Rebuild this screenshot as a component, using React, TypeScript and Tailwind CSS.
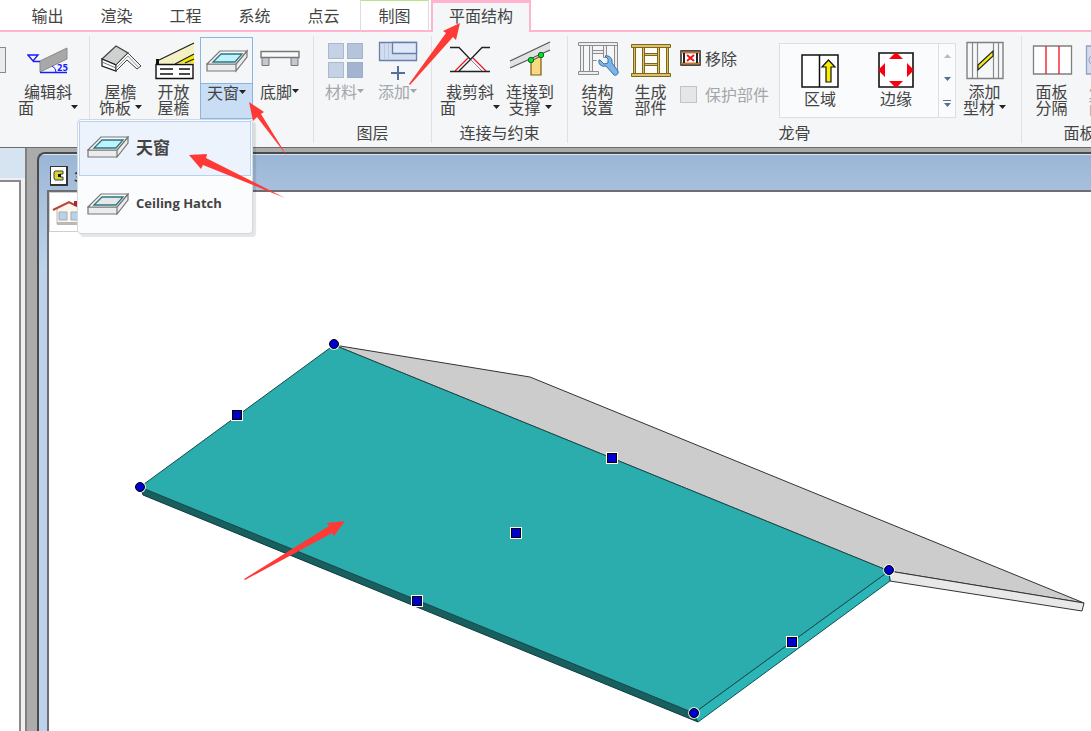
import { useState, type ReactNode } from 'react';

const leftTabs = ['输出', '渲染', '工程', '系统', '点云'];

/* ---------- icons ---------- */

function Icon({ children }: { children: ReactNode }) {
  return (
    <svg width="42" height="40" viewBox="0 0 42 40" fill="none" className="block shrink-0" aria-hidden="true">
      {children}
    </svg>
  );
}

function EditSlopeIcon() {
  return (
    <Icon>
      <path d="M13 21 40 8v11L13 32z" fill="#a8a8a8" stroke="#8a8a8a" />
      <path d="M1 15h10l-5 6zM6 21.500h7M13 32.500h27" stroke="#1a1aff" strokeWidth="1.4" />
      <path d="M25 26q4 2 4 6" stroke="#1a1aff" />
      <text x="30" y="31" fontSize="8" fontWeight="700" fill="#1a1aff" fontFamily="DejaVu Sans">25</text>
    </Icon>
  );
}

function FasciaIcon() {
  return (
    <Icon>
      <path d="M2 19 16 6l12 7-12 12z" fill="#cfd1d1" stroke="#444" strokeWidth="1.2" />
      <path d="M2 19l14 6v6L2 26z" fill="#fff" stroke="#222" strokeWidth="1.3" />
      <path d="M2 22l14 6" stroke="#777" />
      <path d="M28 13l13 13-4 3-10-9-11 11v-6z" fill="#f4f4f4" stroke="#444" />
      <path d="M16 28 28 16l11 12" stroke="#888" strokeWidth="0.8" />
    </Icon>
  );
}

function OpenEavesIcon() {
  return (
    <Icon>
      <path d="M4 21 41 3v9L24 24H4z" fill="#f3f1c4" />
      <path d="M22 24 41 14v9H26z" fill="#f6ea00" />
      <path d="M4 21 41 3M22 24l19-10M32 23l9-4" stroke="#222" strokeWidth="1.3" />
      <path d="M3 19h3v5H3z" fill="#111" />
      <path d="M3 24.500h37v14H3z" fill="#fff" stroke="#111" strokeWidth="1.4" />
      <path d="M7 29h13M26 29h11M7 34h13M26 34h11" stroke="#111" strokeWidth="1.4" />
    </Icon>
  );
}

function HatchShape({ glass }: { glass: string }) {
  return (
    <>
      <path d="M1 23v7h29V23zM30 23 41 10v6L30 30z" fill="#ececec" stroke="#777" strokeWidth="1.2" />
      <path d="M1 23 14 10h27L30 23z" fill="#fafafa" stroke="#777" strokeWidth="1.2" />
      <path d="M7 21l8-8h21l-7 8z" fill={glass} stroke="#2a7682" strokeWidth="1.3" />
    </>
  );
}

function FootingIcon() {
  return (
    <Icon>
      <path d="M3 17.500h7v8H3zM32 17.500h7v8h-7z" fill="#c6c5d2" stroke="#777" />
      <path d="M2 11.500h38v6H2z" fill="#f8f9fa" stroke="#777" strokeWidth="1.4" />
    </Icon>
  );
}

function MaterialIcon() {
  return (
    <Icon>
      <path d="M4 3h16v16H4zM4 22h16v16H4z" fill="#c5d1e4" />
      <path d="M23 3h16v16H23z" fill="#b5c4db" />
      <path d="M23 22h16v16H23z" fill="#a4b4d0" />
      <path d="M4.500 3.500h15v15h-15zM23.500 3.500h15v15h-15zM4.500 22.500h15v15h-15zM23.500 22.500h15v15h-15z" stroke="#97a8c5" strokeOpacity=".6" />
    </Icon>
  );
}

function AddLayerIcon() {
  return (
    <Icon>
      <path d="M2.500 2.500h37v18h-37z" fill="#d2def0" stroke="#6880aa" strokeWidth="1.3" />
      <path d="M15.500 2.500h24v11h-24z" fill="#e0e9f7" stroke="#6880aa" strokeWidth="1.3" />
      <path d="M7.500 4v15M11.500 4v15" stroke="#b9c9e2" />
      <path d="M21 26v14M14 33h14" stroke="#566f9c" strokeWidth="2" />
    </Icon>
  );
}

function TrimSlopeIcon() {
  return (
    <Icon>
      <path d="M19 18 6 31M24 18l13 13" stroke="#f0141e" strokeWidth="1.2" />
      <path d="M21 19l12 12" stroke="#888" />
      <path d="M1 7.500h9l11.500 12L10 31M41 7.500h-8l-11.500 12M1 31.500h40" stroke="#222" strokeWidth="1.3" />
    </Icon>
  );
}

function ConnectIcon() {
  return (
    <Icon>
      <path d="M1 21 41 2v8L1 28z" fill="#e2e2e2" />
      <path d="M1 21 41 2M1 28l40-18" stroke="#555" strokeWidth="1.2" />
      <path d="M22 21l10-5v19H22z" fill="#f8da83" stroke="#7c5a14" strokeWidth="1.2" />
      <circle cx="22" cy="20" r="2.700" fill="#0ee01a" stroke="#063" />
      <circle cx="32" cy="15" r="2.700" fill="#0ee01a" stroke="#063" />
    </Icon>
  );
}

function StructureIcon() {
  return (
    <Icon>
      <path d="M1.500 2.500h39v3h-39zM1.500 31.500h20v3h-20zM3.500 5.500h3v26h-3zM12.500 5.500h3v26h-3zM26.500 5.500h3v12h-3zM37.500 5.500h3v26h-3zM15.500 10.500h11v3h-11zM15.500 20.500h4" fill="#eee" stroke="#8d8d8d" />
      <path
        d="M23 20l4 4 4-1 0-4-3-3c4-1 8 2 7 7l6 8c1 3-2 5-4 4l-8-9c-5 1-8-2-7-6z"
        fill="#7db5ea"
        stroke="#3b6ea5"
      />
    </Icon>
  );
}

function GenerateIcon() {
  return (
    <Icon>
      <path d="M2 6h38v30H2z" fill="#fdfdf6" />
      <path
        d="M1.500 4.500h39v3h-39zM1.500 33.500h39v3h-39zM3.500 7.500h2v26h-2zM12.500 7.500h2v26h-2zM27.500 7.500h2v26h-2zM36.500 7.500h2v26h-2zM14.500 13.500h13v2h-13zM14.500 23.500h13v2h-13z"
        fill="#e0c063"
        stroke="#7a6726"
      />
    </Icon>
  );
}

function ProfileIcon() {
  return (
    <Icon>
      <path d="M3 2.500h36v36H3z" fill="#f6f7f8" stroke="#808080" strokeWidth="1.4" />
      <path d="M8.500 3v35M13.500 3v35M29.500 3v35M34.500 3v35" stroke="#8a8a8a" strokeWidth="1.2" />
      <path d="M14 25 29 11v5L14 30z" fill="#f4ea1b" stroke="#222" strokeWidth="1.1" />
    </Icon>
  );
}

function PanelSplitIcon() {
  return (
    <Icon>
      <path d="M2.500 6h38v28h-38z" fill="#fff" stroke="#808080" strokeWidth="1.3" />
      <path d="M15 6v28M28 6v28" stroke="#f5222d" strokeWidth="1.4" />
    </Icon>
  );
}

function PanelMakeIcon() {
  return (
    <Icon>
      <path d="M2.500 6h38v28h-38z" fill="#d2def0" stroke="#8ea3c8" strokeWidth="1.3" />
      <circle cx="10" cy="20" r="5" stroke="#8ea3c8" />
    </Icon>
  );
}

/* ---------- ribbon parts ---------- */

function Caret({ className = '' }: { className?: string }) {
  return (
    <svg width="7" height="4" viewBox="0 0 7 4" className={`shrink-0 ${className}`} aria-hidden="true">
      <path d="M0 0h7L3.500 4z" fill="currentColor" />
    </svg>
  );
}

type ToolProps = {
  icon: ReactNode;
  top: string;
  bottom?: string;
  caret?: boolean;
  wide?: boolean;
  spread?: boolean;
  disabled?: boolean;
};

function Tool({ icon, top, bottom, caret, wide, spread, disabled }: ToolProps) {
  return (
    <button
      type="button"
      disabled={disabled}
      className={`flex h-[82px] shrink-0 flex-col items-center leading-4 ${wide ? 'w-[60px]' : 'w-[53px]'} ${
        disabled ? 'text-[#a3a6aa]' : 'text-[#444]'
      }`}
    >
      <span className="flex h-[46px] items-center">{icon}</span>
      <span className="flex items-center whitespace-nowrap">
        {top}
        {caret && !bottom && <Caret className={disabled ? '' : 'text-[#222]'} />}
      </span>
      {bottom && (
        <span className={`flex items-center whitespace-nowrap ${spread ? 'w-full justify-between' : 'gap-1'}`}>
          {bottom}
          {caret && <Caret className="text-[#222]" />}
        </span>
      )}
    </button>
  );
}

function Group({ label, className, children }: { label?: string; className: string; children: ReactNode }) {
  return (
    <section className={`flex shrink-0 flex-col ${className}`}>
      <div className="flex pt-[5px]">{children}</div>
      <div className="mt-[3px] h-5 text-center leading-5">{label}</div>
    </section>
  );
}

function Divider() {
  return <div className="mt-1 mb-1 w-px shrink-0 bg-[#dfe1e4]" />;
}

function SkylightMenu() {
  const [open, setOpen] = useState(true);

  return (
    <div className="relative">
      <button
        type="button"
        aria-expanded={open}
        onClick={() => setOpen(!open)}
        className="flex h-[82px] w-[53px] flex-col border border-[#86b5e6] leading-4"
      >
        <span className="flex h-[45px] w-full items-center justify-center">
          <Icon>
            <HatchShape glass="#bff3fb" />
          </Icon>
        </span>
        <span className="flex w-full flex-1 justify-center border-t border-[#86b5e6] bg-[#c9def5]">
          <span className="flex h-4 items-center">
            天窗
            <Caret className="text-[#222]" />
          </span>
        </span>
      </button>
      {open && (
        <ul className="absolute top-[82px] right-0 z-20 flex w-[176px] flex-col rounded-sm border border-[#d5d7da] bg-[#fbfcfe] p-px text-[13px] font-bold text-[#444] shadow-[3px_3px_1px_rgba(0,0,0,0.1)]">
          <li>
            <button type="button" className="flex h-[55px] w-full items-center gap-[7px] border border-[#b4d3f3] bg-[#ecf3fc] px-[7px] pb-1">
              <svg width="42" height="22" viewBox="0 9 42 22" aria-hidden="true">
                <HatchShape glass="#bff3fb" />
              </svg>
              <span className="text-[17px]">天窗</span>
            </button>
          </li>
          <li>
            <button type="button" className="flex h-[56px] w-full items-center gap-[7px] border border-transparent px-[7px]">
              <svg width="42" height="22" viewBox="0 9 42 22" aria-hidden="true">
                <HatchShape glass="#e6e8e8" />
              </svg>
              <span className="font-['Open_Sans','Noto_Sans',sans-serif] whitespace-nowrap">Ceiling Hatch</span>
            </button>
          </li>
        </ul>
      )}
    </div>
  );
}

function FramingOptions() {
  return (
    <div className="ml-[3px] flex w-[99px] shrink-0 flex-col">
      <button type="button" className="mt-[11px] flex h-5 items-center gap-1">
        <svg width="21" height="16" viewBox="0 0 21 16" fill="none" aria-hidden="true">
          <path d="M1 1h19v14H1z" fill="#fff" stroke="#111" strokeWidth="1.4" />
          <path d="M1 2.500h19M1 13.500h19" stroke="#b97a3d" strokeWidth="2" />
          <path d="M4 3v10M17 3v10" stroke="#222" strokeWidth="2" />
          <path d="M7 5l7 6M14 5l-7 6" stroke="#f01414" strokeWidth="2" />
        </svg>
        移除
      </button>
      <label className="mt-4 flex h-5 items-center gap-2 whitespace-nowrap text-[#a3a6aa]">
        <input type="checkbox" disabled className="size-[17px] appearance-none border border-[#c3c3c3] bg-[#e6e6e6]" />
        保护部件
      </label>
    </div>
  );
}

function Gallery() {
  return (
    <div className="mt-1.5 flex h-[75px] w-[177px] shrink-0 border border-[#dcdfe3] bg-[#fafbfd] pl-0.5">
      <button type="button" className="flex w-[76px] flex-col items-center justify-end pb-[11px] leading-4">
        <svg width="38" height="34" viewBox="0 0 38 34" fill="none" className="mb-0.5" aria-hidden="true">
          <path d="M1 1h36v32H1zM18.500 1v32" fill="#fff" stroke="#111" strokeWidth="1.5" />
          <path d="M27.500 6 34 13h-4v15h-5V13h-4z" fill="#f7ee00" stroke="#111" strokeWidth="1.200" />
        </svg>
        区域
      </button>
      <button type="button" className="flex w-[76px] flex-col items-center justify-end pb-[11px] leading-4">
        <svg width="36" height="36" viewBox="0 0 36 36" fill="none" className="mb-0.5" aria-hidden="true">
          <path d="M1 1h34v34H1z" fill="#fff" stroke="#111" strokeWidth="1.600" />
          <path d="M18 0l7 7H11zM18 36l7-7H11zM0 18l7-7v14zM36 18l-7-7v14z" fill="#f9000f" />
        </svg>
        边缘
      </button>
      <div className="ml-auto flex w-[17px] flex-col items-center justify-between border-l border-[#dcdfe3] py-2.5 text-[#566f92]">
        <button type="button" aria-label="向上" className="text-[#b5bbc4]">
          <Caret className="rotate-180" />
        </button>
        <button type="button" aria-label="向下">
          <Caret />
        </button>
        <button type="button" aria-label="更多" className="flex flex-col items-center gap-0.5">
          <span className="h-px w-2 bg-[#566f92]" />
          <Caret />
        </button>
      </div>
    </div>
  );
}

function Ribbon() {
  return (
    <div className="flex h-[115px] shrink-0 bg-[#f4f6f8]">
      <Group className="w-[89px]">
        <div className="mt-2.5 mr-3 h-[26px] w-1.5 border border-l-0 border-[#8a8a8a] bg-[#ececec]" />
        <Tool wide spread caret icon={<EditSlopeIcon />} top="编辑斜" bottom="面" />
      </Group>
      <Divider />
      <Group className="w-[223px] pl-1">
        <Tool caret icon={<FasciaIcon />} top="屋檐" bottom="饰板" />
        <Tool icon={<OpenEavesIcon />} top="开放" bottom="屋檐" />
        <SkylightMenu />
        <Tool caret icon={<FootingIcon />} top="底脚" />
      </Group>
      <Divider />
      <Group className="w-[117px] px-1" label="图层">
        <Tool disabled caret icon={<MaterialIcon />} top="材料" />
        <Tool disabled caret icon={<AddLayerIcon />} top="添加" />
      </Group>
      <Divider />
      <Group className="w-[135px] px-2" label="连接与约束">
        <Tool wide spread caret icon={<TrimSlopeIcon />} top="裁剪斜" bottom="面" />
        <Tool wide caret icon={<ConnectIcon />} top="连接到" bottom="支撑" />
      </Group>
      <Divider />
      <Group className="w-[453px] px-[3px]" label="龙骨">
        <Tool icon={<StructureIcon />} top="结构" bottom="设置" />
        <Tool icon={<GenerateIcon />} top="生成" bottom="部件" />
        <FramingOptions />
        <Gallery />
        <span className="w-0.5" />
        <Tool caret icon={<ProfileIcon />} top="添加" bottom="型材" />
      </Group>
      <Divider />
      <Group className="w-[115px] px-[3px]" label="面板">
        <Tool icon={<PanelSplitIcon />} top="面板" bottom="分隔" />
        <Tool disabled icon={<PanelMakeIcon />} top="生成" bottom="面板" />
      </Group>
    </div>
  );
}

function TabBar() {
  return (
    <nav className="flex h-8 shrink-0 bg-white">
      <div className="w-[13px] border-b-2 border-[#ffb3cf]" />
      {leftTabs.map((tab) => (
        <button key={tab} type="button" className="w-[69px] border-b-2 border-[#ffb3cf]">
          {tab}
        </button>
      ))}
      <div className="w-0.5 border-b-2 border-[#ffb3cf]" />
      <button
        type="button"
        className="w-[69px] border-x border-t border-b-2 border-t-[#b6e58c] border-r-[#dddddd] border-b-[#ffb3cf] border-l-[#dddddd] pb-0.5"
      >
        制图
      </button>
      <div className="w-0.5 border-b-2 border-[#ffb3cf]" />
      <button type="button" className="w-[100px] border-x-2 border-t-3 border-[#ffb3cf] bg-[#f4f6f8] pb-[5px]">
        平面结构
      </button>
      <div className="flex-1 border-b-2 border-[#ffb3cf]" />
    </nav>
  );
}

/* ---------- 3D view ---------- */

const corners = [
  [334, 344],
  [140, 487],
  [889, 570],
  [694, 713],
];

const midpoints = [
  [236, 415],
  [611, 458],
  [515, 533],
  [416, 601],
  [791, 642],
];

function Scene() {
  return (
    <svg width="1042" height="539" viewBox="49 192 1042 539" className="block shrink-0" role="img" aria-label="3D">
      <g stroke="#333" strokeWidth="1" strokeLinejoin="round">
        <path d="M334 345 530 377 1084 603 889 571z" fill="#cccccc" />
        <path d="M889 571l195 32-2 8-192-30z" fill="#e8e8e8" />
        <path d="M140 487 694 713l4 9L143 495z" fill="#185f60" stroke="#0d3c3d" />
        <path d="M889 571l1 10-192 141-4-9z" fill="#2cb5b6" stroke="#0f5051" />
        <path d="M334 345 889 571 694 713 140 487z" fill="#2badae" stroke="#1d4b4c" />
      </g>
      {corners.map(([x, y]) => (
        <g key={`${x}-${y}`}>
          <circle cx={x} cy={y} r="6" fill="#fff" fillOpacity=".8" />
          <circle cx={x} cy={y} r="4.500" fill="#0000cc" stroke="#000" />
        </g>
      ))}
      {midpoints.map(([x, y]) => (
        <g key={`${x}-${y}`}>
          <rect x={x - 5} y={y - 6} width="12" height="12" fill="#fff" />
          <rect x={x - 3.5} y={y - 4.5} width="9" height="9" fill="#0000cc" stroke="#000" />
        </g>
      ))}
    </svg>
  );
}

function ViewWindow() {
  return (
    <div className="mt-1 ml-2.5 flex flex-1 flex-col overflow-hidden rounded-tl-lg border-t-2 border-l-2 border-[#4a4a4a] bg-linear-to-b from-[#9bb6d5] to-[#bdd3ec] to-20%">
      <div className="flex h-9 shrink-0 items-center gap-1.5 border-t border-[#d8e6f5] px-[11px] pt-1.5 text-sm font-bold text-[#333]">
        <svg width="18" height="20" viewBox="0 0 18 20" aria-hidden="true">
          <path d="M0 0h18v20H0z" fill="#333" />
          <path d="M1 1h15v17H1z" fill="#fff" />
          <path d="M5 5h8v3h-3v3h3v3H5l-1-2V6z" fill="#d6d62b" stroke="#444" />
          <path d="M8 8h3v3H8z" fill="#111" />
        </svg>
        3D
      </div>
      <div className="relative ml-2 flex-1 overflow-hidden border-t-2 border-l-2 border-[#6e6e6e] bg-white">
        <Scene />
        <button type="button" aria-label="主页" className="absolute top-0 left-0 h-10 w-10 border border-[#cfcfcf] bg-white">
          <svg width="38" height="38" viewBox="0 0 38 38" fill="none" aria-hidden="true">
            <path d="M7 15 19 10l12 5v16H7z" fill="#faf6ea" stroke="#bbb" />
            <path d="M7 29h24v3H7z" fill="#b9b9b9" />
            <path d="M9 19h8v8H9zM21 19h8v8h-8z" fill="#b7d2f1" stroke="#aaa" />
            <path d="M3 17l16-8 16 8" stroke="#bd4338" strokeWidth="2" />
            <path d="M24 8h4v5h-4z" fill="#b22530" />
          </svg>
        </button>
      </div>
    </div>
  );
}

/* red pointers drawn over the whole window */
function Pointers() {
  return (
    <svg width="1091" height="731" viewBox="0 0 1091 731" className="pointer-events-none absolute top-0 left-0 z-30" aria-hidden="true">
      <g fill="#ff3a36">
        <path d="M460 23 443 31l3 2-37 51 1 1 43-48 3 3z" />
        <path d="M249 102l15 10-3 2 26 42-30-39-4 4z" />
        <path d="M189 155l18-1-1 4 79 40-82-33-2 4z" />
        <path d="M345 521l-18 2 2 3-85 53 1 1 87-47 2 3z" />
      </g>
    </svg>
  );
}

export default function App() {
  return (
    <div className="relative flex h-screen flex-col overflow-hidden bg-white font-['Noto_Sans_CJK_SC',sans-serif] text-base text-[#444]">
      <TabBar />
      <Ribbon />
      <main className="flex min-h-0 flex-1 border-t border-[#6b6b6b] bg-[#ababab]">
        <aside className="flex w-[27px] shrink-0 flex-col border-r-2 border-[#808080] bg-[#f0f0f0]">
          <div className="h-[30px] bg-[#d6e3f0]" />
          <div className="mt-0.5 mr-1 flex-1 border-t-2 border-r-2 border-[#8a8a8a] bg-white" />
        </aside>
        <ViewWindow />
      </main>
      <Pointers />
    </div>
  );
}
